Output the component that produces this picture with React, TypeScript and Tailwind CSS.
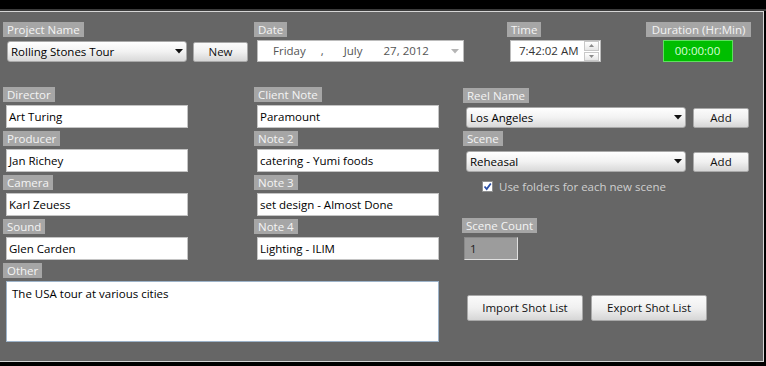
import React from 'react';

const Label: React.FC<{ text: string; className?: string }> = ({ text, className = '' }) => (
  <div className={`self-start bg-[#a6a6a6] text-[#f4f4f4] h-[15px] leading-[15px] px-[4px] whitespace-nowrap ${className}`}>
    {text}
  </div>
);

const TextBox: React.FC<{ value: string }> = ({ value }) => (
  <div className="ml-[3px] mt-[3px] w-[182px] h-[23px] bg-white border border-[#c4c4c4] pl-[2px] flex items-center text-black whitespace-nowrap">
    {value}
  </div>
);

const Field: React.FC<{ label: string; value: string }> = ({ label, value }) => (
  <div className="flex flex-col h-[44px]">
    <Label text={label} />
    <TextBox value={value} />
  </div>
);

const Arrow: React.FC<{ color?: string }> = ({ color = '#111' }) => (
  <svg width="8" height="5" viewBox="0 0 8 5">
    <path d="M0 0 L8 0 L4 4.5 Z" fill={color} />
  </svg>
);

const Combo: React.FC<{ value: string; width: string }> = ({ value, width }) => (
  <div
    className={`${width} h-[21px] rounded-[3px] border border-[#a9a9a9] bg-linear-to-b from-white via-[#f2f2f2] to-[#d9d9d9] flex items-center justify-between pl-[3px] pr-[3px] text-black`}
  >
    <span className="whitespace-nowrap">{value}</span>
    <Arrow />
  </div>
);

const Button: React.FC<{ text: string; className: string }> = ({ text, className }) => (
  <div
    className={`${className} rounded-[2px] border border-[#a8a8a8] bg-linear-to-b from-[#fbfbfb] via-[#f0f0f0] to-[#d6d6d6] flex items-center justify-center text-[#111] whitespace-nowrap`}
  >
    {text}
  </div>
);

export default function App() {
  return (
    <div className="w-[766px] h-[366px] bg-black flex flex-col font-['Open_Sans',sans-serif] text-[11.5px] overflow-hidden">
      <div className="h-[9px] shrink-0 bg-black" />
      <div className="h-[2px] shrink-0 bg-[#3c3c3c]" />
      <div className="w-[764px] h-[351px] shrink-0 bg-[#666666] border-t border-r border-b border-[#d6d6d6] pt-[10px] pl-[3px] flex flex-col">
        {/* top row */}
        <div className="flex h-[41px] shrink-0">
          <div className="w-[251px] flex flex-col">
            <Label text="Project Name" />
            <div className="flex items-center ml-[4px] mt-[4px] gap-[6px]">
              <Combo value="Rolling Stones Tour" width="w-[180px]" />
              <Button text="New" className="w-[55px] h-[20px]" />
            </div>
          </div>
          <div className="w-[253px] flex flex-col">
            <Label text="Date" />
            <div className="ml-[3px] mt-[3px] w-[207px] h-[22px] bg-white border border-[#bcbcbc] flex items-center text-[#555] pr-[4px]">
              <span className="ml-[15px]">Friday</span>
              <span className="ml-[15px]">,</span>
              <span className="ml-[20px]">July</span>
              <span className="ml-[21px]">27, 2012</span>
              <span className="ml-auto">
                <Arrow color="#b5b5b5" />
              </span>
            </div>
          </div>
          <div className="w-[139px] flex flex-col">
            <Label text="Time" />
            <div className="ml-[3px] mt-[3px] w-[91px] h-[22px] bg-white border border-[#bcbcbc] flex items-center text-[#333]">
              <span className="ml-[8px]">7:42:02 AM</span>
              <div className="ml-auto mr-[1px] flex flex-col w-[15px] h-[20px] gap-[1px]">
                <div className="flex-1 border border-[#c8c8c8] bg-linear-to-b from-white to-[#e6e6e6] flex items-center justify-center">
                  <svg width="5" height="3" viewBox="0 0 5 3">
                    <path d="M0 3 L5 3 L2.5 0 Z" fill="#8a8a8a" />
                  </svg>
                </div>
                <div className="flex-1 border border-[#c8c8c8] bg-linear-to-b from-white to-[#e6e6e6] flex items-center justify-center">
                  <svg width="5" height="3" viewBox="0 0 5 3">
                    <path d="M0 0 L5 0 L2.5 3 Z" fill="#8a8a8a" />
                  </svg>
                </div>
              </div>
            </div>
          </div>
          <div className="w-[105px] flex flex-col items-center">
            <Label text="Duration (Hr:Min)" className="self-stretch text-center" />
            <div className="mt-[3px] mr-[2px] w-[70px] h-[22px] bg-[#00be00] border border-[#5ee05e] flex items-center justify-center text-[#d8ffd8]">
              00:00:00
            </div>
          </div>
        </div>

        {/* lower area */}
        <div className="flex mt-[24px]">
          <div className="w-[459px] flex flex-col">
            <div className="flex">
              <div className="w-[251px] flex flex-col">
                <Field label="Director" value="Art Turing" />
                <Field label="Producer" value="Jan Richey" />
                <Field label="Camera" value="Karl Zeuess" />
                <Field label="Sound" value="Glen Carden" />
              </div>
              <div className="flex flex-col">
                <Field label="Client Note" value="Paramount" />
                <Field label="Note 2" value="catering - Yumi foods" />
                <Field label="Note 3" value="set design - Almost Done" />
                <Field label="Note 4" value="Lighting - ILIM" />
              </div>
            </div>
            <div className="flex flex-col">
              <Label text="Other" className="h-[14px] leading-[14px]" />
              <div className="ml-[3px] mt-[3px] w-[433px] h-[61px] bg-white border border-[#9db3c9] px-[5px] pt-[3px] text-black">
                The USA tour at various cities
              </div>
            </div>
          </div>

          <div className="flex flex-col pt-[1px]">
            <Label text="Reel Name" className="ml-[1px] h-[14px] leading-[14px]" />
            <div className="flex items-center ml-[4px] mt-[4px] gap-[7px] h-[21px]">
              <Combo value="Los Angeles" width="w-[220px]" />
              <Button text="Add" className="w-[56px] h-[20px]" />
            </div>
            <Label text="Scene" className="ml-[1px] mt-[3px]" />
            <div className="flex items-center ml-[4px] mt-[5px] gap-[7px] h-[21px]">
              <Combo value="Reheasal" width="w-[220px]" />
              <Button text="Add" className="w-[56px] h-[20px]" />
            </div>
            <div className="flex items-center ml-[20px] mt-[9px] gap-[6px] h-[11px] leading-[11px] text-[#cfcfcf]">
              <div className="w-[11px] h-[11px] bg-white border border-[#8e8f8f] flex items-center justify-center">
                <svg width="9" height="9" viewBox="0 0 9 9">
                  <path d="M1.5 4.5 L3.7 7 L7.8 1.5" stroke="#2a4fa8" strokeWidth="1.8" fill="none" />
                </svg>
              </div>
              <span>Use folders for each new scene</span>
            </div>
            <Label text="Scene Count" className="mt-[26px] h-[14px] leading-[14px]" />
            <div className="ml-[2px] mt-[4px] w-[54px] h-[23px] bg-[#9c9c9c] border-t border-l border-[#8a8a8a] border-b-[#e0e0e0] border-r-[#e0e0e0] border-b border-r pl-[5px] flex items-center text-[#222]">
              1
            </div>
            <div className="flex ml-[5px] mt-[35px] gap-[8px]">
              <Button text="Import Shot List" className="w-[116px] h-[26px]" />
              <Button text="Export Shot List" className="w-[116px] h-[26px]" />
            </div>
          </div>
        </div>
      </div>
    </div>
  );
}
